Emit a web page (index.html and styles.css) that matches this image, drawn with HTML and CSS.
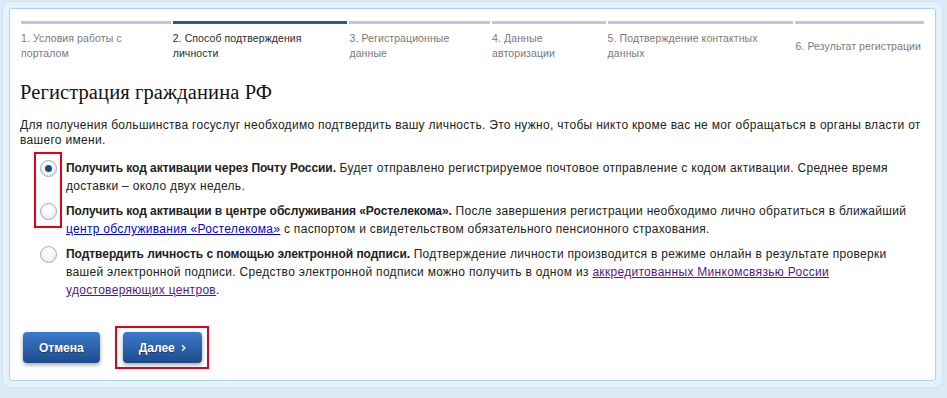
FILE: index.html
```html
<!DOCTYPE html>
<html lang="ru">
<head>
  <meta charset="UTF-8" />
  <title>Регистрация гражданина РФ</title>
  <link rel="stylesheet" href="styles.css">
</head>
<body>

  <div class="wrap">
    <div class="card">

      <div class="steps">
        <div class="step"><span>1. Условия работы с<br>порталом</span></div>
        <div class="step active"><span>2. Способ подтверждения<br>личности</span></div>
        <div class="step"><span>3. Регистрационные<br>данные</span></div>
        <div class="step"><span>4. Данные<br>авторизации</span></div>
        <div class="step"><span>5. Подтверждение контактных<br>данных</span></div>
        <div class="step"><span>6. Результат регистрации</span></div>
      </div>

      <h2>Регистрация гражданина РФ</h2>

      <p class="intro">Для получения большинства госуслуг необходимо подтвердить вашу личность. Это нужно, чтобы никто кроме вас не мог обращаться в органы власти от вашего имени.</p>

      <div class="options">
        <span class="mark-box"></span>

        <label class="option">
          <span class="radio checked"></span>
          <span class="option-text"><b>Получить код активации через Почту России.</b> Будет отправлено регистрируемое почтовое отправление с кодом активации. Среднее время доставки – около двух недель.</span>
        </label>

        <label class="option">
          <span class="radio"></span>
          <span class="option-text"><b>Получить код активации в центре обслуживания «Ростелекома».</b> После завершения регистрации необходимо лично обратиться в ближайший <a href="#" class="link">центр обслуживания «Ростелекома»</a> с паспортом и свидетельством обязательного пенсионного страхования.</span>
        </label>

        <label class="option">
          <span class="radio"></span>
          <span class="option-text"><b>Подтвердить личность с помощью электронной подписи.</b> Подтверждение личности производится в режиме онлайн в результате проверки вашей электронной подписи. Средство электронной подписи можно получить в одном из <a href="#" class="link visited">аккредитованных Минкомсвязью России удостоверяющих центров</a>.</span>
        </label>
      </div>

      <div class="buttons-row">
        <button type="button" class="btn">Отмена</button>
        <button type="button" class="btn btn-next">Далее
          <svg width="7" height="10" viewBox="0 0 7 10"><polyline points="1.5,1 5.5,5 1.5,9" fill="none" stroke="#fff" stroke-width="2"/></svg>
        </button>
      </div>

    </div>
  </div>

</body>
</html>
```

FILE: styles.css
```css
* {
  box-sizing: border-box;
}
body {
  margin: 0;
  font-family: "Liberation Sans", Arial, sans-serif;
  font-size: 12px;
  letter-spacing: 0.3px;
  color: #222;
  background-color: #dceaf8;
}
.wrap {
  width: 941px;
  margin: 1px 0 0 2px;
  padding: 6px;
  background-color: #e7f1fc;
  border: 1px solid #d0e2f4;
  border-radius: 8px;
}
.card {
  background-color: #fff;
  border: 1px solid #a9d6e2;
  border-radius: 3px;
  padding: 12px 11px 17px 10px;
}

/* steps */
.steps {
  display: grid;
  grid-template-columns: 149fr 174fr 140fr 113fr 185fr 128fr;
  gap: 2px;
  margin-left: 1px;
}
.step {
  display: flex;
  align-items: center;
  border-top: 3px solid #b7cade;
  padding-top: 7px;
  font-size: 10.5px;
  letter-spacing: 0.1px;
  line-height: 15px;
  color: #7a7a7a;
  min-height: 40px;
  white-space: nowrap;
}
.step.active {
  border-top-color: #2c5a97;
  color: #2b2b2b;
}

h2 {
  margin: 18px 0 0;
  font-family: "Liberation Serif", "Times New Roman", serif;
  font-size: 20.5px;
  font-weight: normal;
  letter-spacing: 0.1px;
  line-height: 26px;
  color: #111;
}
.intro {
  margin: 13px 0 0;
  line-height: 15px;
}

/* options */
.options {
  position: relative;
  margin-top: 11px;
}
.option {
  display: flex;
  gap: 9px;
  padding: 0 16px 0 20px;
  margin-bottom: 7px;
  line-height: 18px;
  cursor: pointer;
}
.option b {
  letter-spacing: -0.05px;
}
.radio {
  flex: none;
  position: relative;
  width: 17px;
  height: 17px;
  margin-top: 1px;
  border: 1px solid #98abc0;
  border-radius: 50%;
  background: radial-gradient(circle at 50% 35%, #ffffff 20%, #dde5ef 100%);
}
.radio.checked::after {
  content: "";
  position: absolute;
  left: 4px;
  top: 4px;
  width: 7px;
  height: 7px;
  border-radius: 50%;
  background-color: #1b4a8c;
}
.link {
  color: #0000ee;
}
.link.visited {
  color: #551a8b;
}
.mark-box {
  position: absolute;
  left: 14px;
  top: -7px;
  width: 28px;
  height: 76px;
  border: 2px solid #e3001b;
}

/* buttons */
.buttons-row {
  display: flex;
  gap: 23px;
  margin: 33px 0 0 3px;
}
.btn {
  position: relative;
  display: flex;
  align-items: center;
  justify-content: center;
  gap: 6px;
  height: 31px;
  padding: 0 16px;
  font-family: "Liberation Sans", Arial, sans-serif;
  font-size: 12px;
  font-weight: bold;
  color: #fff;
  text-shadow: 0 1px 1px rgba(0, 0, 0, 0.4);
  border: none;
  border-radius: 4px;
  background: linear-gradient(#3b7acb, #1d4c8c);
  box-shadow: 0 2px 4px rgba(0, 0, 0, 0.35);
  cursor: pointer;
}
.btn-next {
  width: 79px;
}
.btn-next::after {
  content: "";
  position: absolute;
  left: -8px;
  right: -7px;
  top: -6px;
  bottom: -6px;
  border: 2px solid #e3001b;
}
```
